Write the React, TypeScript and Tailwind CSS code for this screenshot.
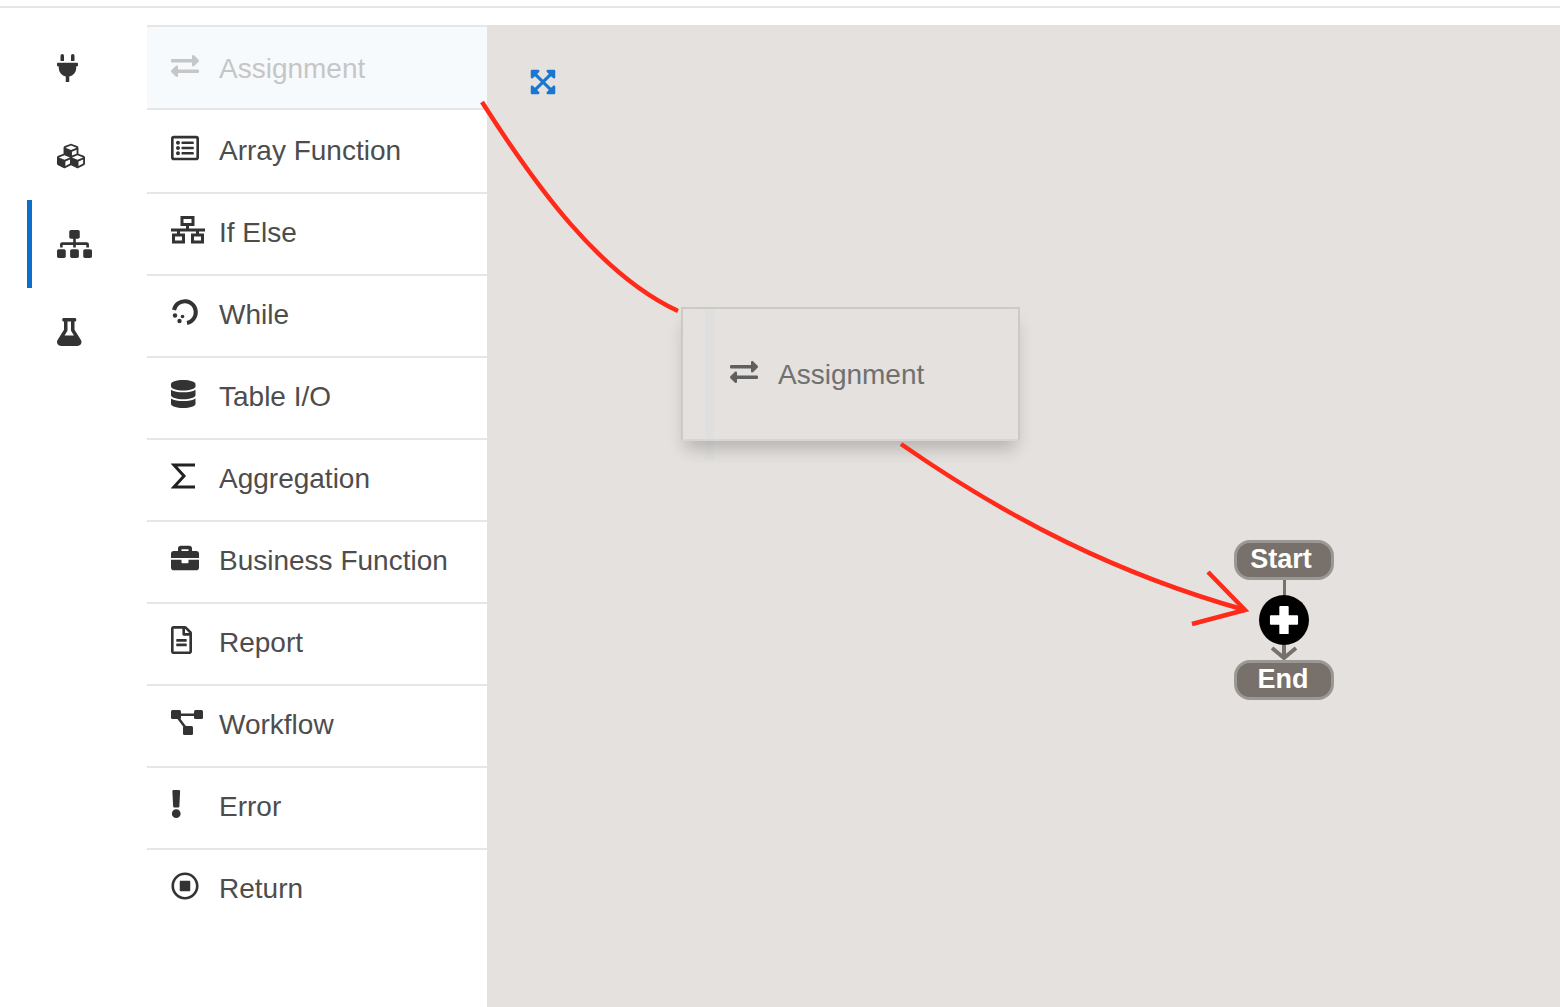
import type { ReactNode } from "react";
import {
  FaBriefcase,
  FaCubes,
  FaDatabase,
  FaExchangeAlt,
  FaExclamation,
  FaExpandArrowsAlt,
  FaFlask,
  FaPlug,
  FaRegFileAlt,
  FaRegListAlt,
  FaRegStopCircle,
  FaSitemap,
} from "react-icons/fa";

const dark = "h-7 text-[#333333]";

function IfElseIcon() {
  return (
    <svg viewBox="0 0 34 28" className="h-7 w-[34px] text-[#333333]" fill="none" stroke="currentColor" strokeWidth="3">
      <rect x="11" y="1.5" width="11" height="7" />
      <rect x="2.5" y="19" width="10" height="7" />
      <rect x="21.5" y="19" width="10" height="7" />
      <path d="M0 14h34M16.5 8v6M7.5 14v5M26.5 14v5" />
    </svg>
  );
}

function WhileIcon() {
  return (
    <svg viewBox="0 0 28 28" className="h-7 w-7 text-[#333333]" fill="none">
      <path d="M3 12A11 11 0 1 1 16 25" stroke="currentColor" strokeWidth="4" />
      <circle cx="4" cy="17.5" r="2.2" fill="currentColor" />
      <circle cx="8.5" cy="23" r="2.2" fill="currentColor" />
      <circle cx="11.5" cy="18.5" r="1.8" fill="currentColor" />
    </svg>
  );
}

function SigmaIcon() {
  return (
    <svg viewBox="0 0 26 28" className="h-7 w-[26px] text-[#222222]" fill="none" stroke="currentColor" strokeWidth="3">
      <path d="M24 3H3l10 11L3 25h21" />
    </svg>
  );
}

function WorkflowIcon() {
  return (
    <svg viewBox="0 0 32 28" className="h-7 w-8 text-[#333333]" fill="currentColor">
      <rect x="0" y="2" width="10" height="9" rx="1.5" />
      <rect x="23" y="2" width="9" height="9" rx="1.5" />
      <rect x="12" y="18" width="10" height="9" rx="1.5" />
      <path d="M8 5.5h16v2.5H8zM5 9l2-1.5 9 12-2 1.5z" />
    </svg>
  );
}

const items: { label: string; icon: ReactNode }[] = [
  { label: "If Else", icon: <IfElseIcon /> },
  { label: "While", icon: <WhileIcon /> },
  { label: "Table I/O", icon: <FaDatabase className={`${dark} w-[24.5px]`} /> },
  { label: "Aggregation", icon: <SigmaIcon /> },
  { label: "Business Function", icon: <FaBriefcase className={`${dark} w-7`} /> },
  { label: "Report", icon: <FaRegFileAlt className={`${dark} w-[21px]`} /> },
  { label: "Workflow", icon: <WorkflowIcon /> },
  { label: "Error", icon: <FaExclamation className={`${dark} w-[10.5px]`} /> },
  { label: "Return", icon: <FaRegStopCircle className={`${dark} w-7`} /> },
];

const railIcons = [
  { icon: <FaPlug className={`${dark} w-[21px]`} />, active: false },
  { icon: <FaCubes className={`${dark} w-7`} />, active: false },
  { icon: <FaSitemap className={`${dark} w-[35px]`} />, active: true },
  { icon: <FaFlask className={`${dark} w-[24.5px]`} />, active: false },
];

function Pill({ label, className }: { label: string; className: string }) {
  return (
    <div
      className={`flex h-10 w-[100px] shrink-0 items-center justify-center rounded-[16px] border-[3px] border-[#9b9793] bg-[#77706b] pb-[2px] text-[27px] font-bold text-white ${className}`}
    >
      {label}
    </div>
  );
}

export default function App() {
  return (
    <div className="flex h-[1007px] w-[1560px] flex-col overflow-hidden bg-white font-['Liberation_Sans',Arial,sans-serif]">
      <div className="mt-[6px] h-[2px] bg-[#e6e6e6]" />
      <div className="mt-[17px] flex min-h-0 flex-1">
        <div className="-mt-px w-[147px] shrink-0 pl-[27px]">
          {railIcons.map((item, i) => (
            <div
              key={i}
              className={`flex h-[88px] items-center border-l-[5px] pl-[25px] ${item.active ? "border-[#0b6fcb]" : "border-transparent"}`}
            >
              {item.icon}
            </div>
          ))}
        </div>

        <div className="w-[340px] shrink-0 border-t-2 border-[#e6e6e6]">
          <div className="flex h-[83px] items-center border-b-2 border-[#e6e6e6] bg-[#f6fafd] pl-6 pt-[3px] text-[28px] text-[#c6c6c6]">
            <span className="flex w-12 -translate-y-[3px] items-center">
              <FaExchangeAlt className="h-7 w-7 text-[#c6c6c6]" />
            </span>
            Assignment
          </div>
          <div className="flex h-[84px] items-center border-b-2 border-[#e6e6e6] pl-6 text-[28px] text-[#4d4d4d]">
            <span className="flex w-12 -translate-y-[3px] items-center">
              <FaRegListAlt className={`${dark} w-7`} />
            </span>
            Array Function
          </div>
          {items.map((item, i) => (
            <div
              key={item.label}
              className={`flex h-[82px] items-center border-b-2 pb-[2px] pl-6 text-[28px] text-[#4d4d4d] ${i < items.length - 1 ? "border-[#e6e6e6]" : "border-transparent"}`}
            >
              <span className="flex w-12 -translate-y-[3px] items-center">{item.icon}</span>
              {item.label}
            </div>
          ))}
        </div>

        <div className="relative flex-1 bg-[#e4e1de]">
          <FaExpandArrowsAlt className="absolute left-[42px] top-[43px] h-7 w-7 text-[#1976d2]" />

          <div className="absolute left-[218px] top-[415px] h-5 w-[9px] bg-[#e1dfdd]" />
          <div className="absolute left-[194px] top-[282px] flex h-[134px] w-[339px] items-center border-2 border-[#cdcac6] border-b-[#d8d5d2] bg-[#e4e1de] pl-[47px] pt-[2px] text-[28px] text-[#707070] shadow-[0_12px_16px_-4px_rgba(0,0,0,0.2)]">
            <div className="absolute bottom-0 left-[22px] top-0 w-[9px] bg-[#dfdfdf]" />
            <span className="relative flex w-12 -translate-y-[3px] items-center">
              <FaExchangeAlt className="h-7 w-7 text-[#5f5f5f]" />
            </span>
            <span className="relative">Assignment</span>
          </div>

          <div className="absolute left-[747px] top-[515px] flex w-[100px] flex-col items-center">
            <Pill label="Start" className="pr-[6px]" />
            <div className="h-[15px] w-[3px] bg-[#77706b]" />
            <div className="flex h-[50px] w-[50px] items-center justify-center rounded-full bg-black">
              <svg viewBox="0 0 32 32" className="h-[30px] w-[30px] text-white" fill="currentColor">
                <path d="M11 2a1 1 0 0 1 1-1h8a1 1 0 0 1 1 1v9h9a1 1 0 0 1 1 1v8a1 1 0 0 1-1 1h-9v9a1 1 0 0 1-1 1h-8a1 1 0 0 1-1-1v-9H2a1 1 0 0 1-1-1v-8a1 1 0 0 1 1-1h9z" />
              </svg>
            </div>
            <svg viewBox="0 0 30 15" className="h-[15px] w-[30px] text-[#77706b]" fill="none" stroke="currentColor" strokeWidth="4">
              <path d="M15 0v13M3 3l12 10L27 3" />
            </svg>
            <Pill label="End" className="pr-[2px]" />
          </div>

          {/* red callout arrows drawn over the canvas */}
          <svg className="absolute -left-[10px] top-[60px] h-[560px] w-[800px] overflow-visible" viewBox="477 85 800 560" fill="none" stroke="#ff2a1a" strokeWidth="4.5">
            <path d="M482 102C535 185 600 275 678 311" />
            <path d="M901 444C1010 520 1120 575 1245 610" />
            <path d="M1208 572L1245 610L1192 624" />
          </svg>
        </div>
      </div>
    </div>
  );
}
